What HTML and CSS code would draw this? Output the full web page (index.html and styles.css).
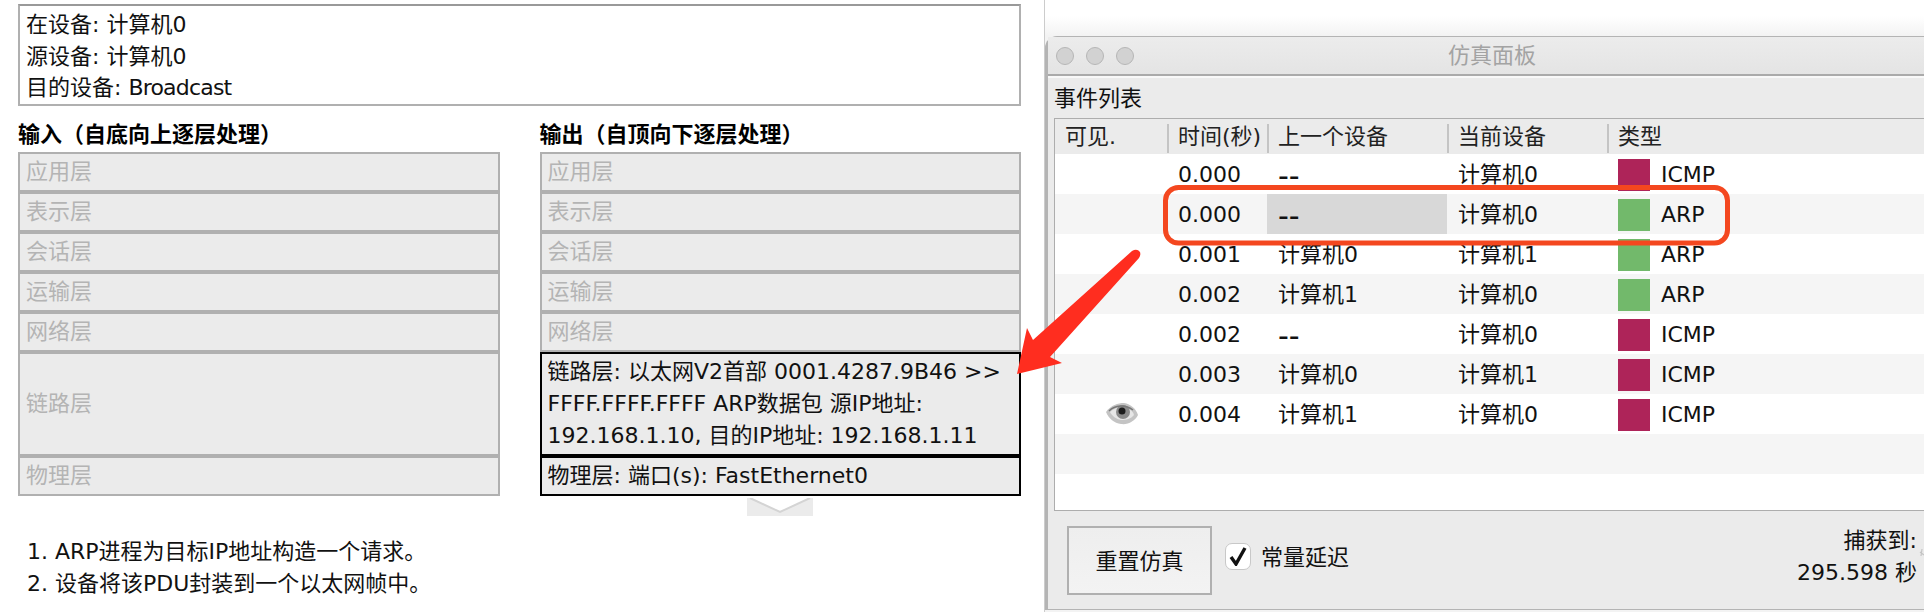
FILE: index.html
```html
<!DOCTYPE html>
<html lang="zh">
<head>
<meta charset="utf-8">
<title>仿真面板</title>
<link rel="stylesheet" href="styles.css">
</head>
<body>
<div class="screen">

<div class="pdu">
    <div class="info">
        <p>在设备: 计算机0</p>
        <p>源设备: 计算机0</p>
        <p>目的设备: <span class="tight">Broadcast</span></p>
    </div>
    <div class="cols">
        <div class="col">
            <h2>输入（自底向上逐层处理）</h2>
            <div class="layer">应用层</div>
            <div class="layer">表示层</div>
            <div class="layer">会话层</div>
            <div class="layer">运输层</div>
            <div class="layer">网络层</div>
            <div class="layer tall">链路层</div>
            <div class="layer">物理层</div>
        </div>
        <div class="col">
            <h2>输出（自顶向下逐层处理）</h2>
            <div class="layer">应用层</div>
            <div class="layer">表示层</div>
            <div class="layer">会话层</div>
            <div class="layer">运输层</div>
            <div class="layer">网络层</div>
            <div class="layer tall on">链路层: 以太网V2首部 0001.4287.9B46 &gt;&gt; FFFF.FFFF.FFFF ARP数据包 源IP地址: 192.168.1.10, 目的IP地址: 192.168.1.11</div>
            <div class="layer on">物理层: 端口(s): FastEthernet0</div>
            <svg class="more" width="66" height="18" viewBox="0 0 66 18">
                <rect width="66" height="18" fill="#ebebeb"/>
                <path d="M3 0 L33 14 L63 0 Z" fill="#fff"/>
                <path d="M3 0 L33 14 L63 0" fill="none" stroke="#d4d4d4" stroke-width="2"/>
            </svg>
        </div>
    </div>
    <ol class="steps">
        <li>1. ARP进程为目标IP地址构造一个请求。</li>
        <li>2. 设备将该PDU封装到一个以太网帧中。</li>
    </ol>
</div>

<div class="side">
    <div class="window">
        <div class="titlebar">
            <div class="lights"><i></i><i></i><i></i></div>
            <div class="title">仿真面板</div>
        </div>
        <div class="list-title">事件列表</div>
        <div class="events">
            <div class="row head">
                <div>可见.</div><div>时间(秒)</div><div>上一个设备</div><div>当前设备</div><div>类型</div>
            </div>
            <div class="row">
                <div></div><div>0.000</div><div class="dash">--</div><div>计算机0</div><div class="type"><b class="icmp"></b>ICMP</div>
            </div>
            <div class="row odd">
                <div></div><div>0.000</div><div class="dash sel">--</div><div>计算机0</div><div class="type"><b class="arp"></b>ARP</div>
            </div>
            <div class="row">
                <div></div><div>0.001</div><div>计算机0</div><div>计算机1</div><div class="type"><b class="arp"></b>ARP</div>
            </div>
            <div class="row odd">
                <div></div><div>0.002</div><div>计算机1</div><div>计算机0</div><div class="type"><b class="arp"></b>ARP</div>
            </div>
            <div class="row">
                <div></div><div>0.002</div><div class="dash">--</div><div>计算机0</div><div class="type"><b class="icmp"></b>ICMP</div>
            </div>
            <div class="row odd">
                <div></div><div>0.003</div><div>计算机0</div><div>计算机1</div><div class="type"><b class="icmp"></b>ICMP</div>
            </div>
            <div class="row">
                <div class="eye">
                    <svg width="32" height="22" viewBox="0 0 32 22">
                        <path d="M0 9 C5 2 12 0 18 0 C25 1 30 6 32 12 C29 18 22 22 15 21 C8 20 3 16 0 9 Z" fill="#c4c4c4"/>
                        <path d="M4 9 C8 5 13 4 18 4 C23 5 27 8 28 12 C25 16 20 17 15 17 C10 16 6 13 4 9 Z" fill="#e6e6e6"/>
                        <circle cx="17" cy="9" r="7" fill="#8a8a8a"/>
                        <circle cx="16" cy="8" r="3.5" fill="#1c1c1c"/>
                        <path d="M3 8 C9 2 19 1 27 7" fill="none" stroke="#777" stroke-width="1.5"/>
                    </svg>
                </div>
                <div>0.004</div><div>计算机1</div><div>计算机0</div><div class="type"><b class="icmp"></b>ICMP</div>
            </div>
            <div class="row odd"></div>
            <div class="row last"></div>
        </div>
        <div class="controls">
            <button class="reset">重置仿真</button>
            <label class="delay">
                <span class="check">
                    <svg width="18" height="20" viewBox="0 0 18 20"><path d="M2 11 L7 18 L16 2" fill="none" stroke="#111" stroke-width="3.4"/></svg>
                </span>
                <span class="delay-text">常量延迟</span>
            </label>
            <div class="captured">捕获到:<br>295.598 秒</div>
        </div>
    </div>
</div>

<!-- annotations drawn over the screenshot -->
<svg class="marks" width="1924" height="612" viewBox="0 0 1924 612">
    <rect x="1165.5" y="187.5" width="562" height="55.5" rx="13" fill="none" stroke="#f4471f" stroke-width="5"/>
    <path d="M1132 251 Q1137 248 1140 252 Q1141 255 1139 258 L1050 357 L1062 363 L1017 374 L1027 328 L1033 340 Z" fill="#ff2d1f"/>
    <path d="M1920 552 L1924 555 M1922 549 L1921 556" fill="none" stroke="#c4c4c4" stroke-width="1.2"/>
</svg>

</div>
</body>
</html>
```

FILE: styles.css
```css
html, body {
    margin: 0;
    padding: 0;
    background: #fff;
}
body {
    font-family: "DejaVu Sans", "Noto Sans CJK SC", sans-serif;
    font-size: 22px;
    color: #111;
}
.screen {
    display: flex;
    position: relative;
    width: 1924px;
    height: 612px;
    overflow: hidden;
}

/* left: pdu details */
.pdu {
    width: 1044px;
    flex: none;
    box-sizing: border-box;
    padding: 4px 0 0 18px;
}
.info {
    width: 1003px;
    height: 102px;
    box-sizing: border-box;
    border: 2px solid #b0b0b0;
    border-top-color: #999;
    padding: 3px 6px;
    line-height: 31.5px;
}
.info p {
    margin: 0;
}
.tight {
    letter-spacing: -0.8px;
}
.cols {
    display: flex;
    gap: 40px;
}
.col {
    width: 481.5px;
}
.col h2 {
    margin: 0;
    height: 46px;
    line-height: 58px;
    font-size: 22px;
    font-weight: bold;
    color: #000;
}
.layer {
    display: flex;
    align-items: center;
    height: 40px;
    box-sizing: border-box;
    border: 2px solid #b0b0b0;
    padding: 0 6px 1px;
    background: #ebebeb;
    color: #b4b4b4;
    line-height: 32px;
}
.tall {
    height: 104px;
}
.on {
    border-color: #000;
    color: #111;
}
.more {
    display: block;
    margin: 2px auto 0;
}
.steps {
    list-style: none;
    margin: 20px 0 0;
    padding: 0 0 0 9px;
    line-height: 31.5px;
}

/* right: simulation panel */
.side {
    flex: 1;
    box-sizing: border-box;
    padding-top: 36px;
    border-left: 1px solid #ccc;
    background: linear-gradient(#fff, #fff 16px, #f3f3f3 36px);
}
.window {
    height: 574px;
    box-sizing: border-box;
    border: 1px solid #b4b4b4;
    border-right: 0;
    border-left-width: 3px;
    border-radius: 12px 0 0 0;
    background: #ebebeb;
}
.titlebar {
    display: flex;
    align-items: center;
    height: 39px;
    box-sizing: border-box;
    border-bottom: 2px solid #aaa;
    background: linear-gradient(#ececec, #e4e4e4);
}
.lights {
    display: flex;
    gap: 12px;
    width: 80px;
    flex: none;
    padding-left: 8px;
}
.lights i {
    width: 16px;
    height: 16px;
    border: 1px solid #b6b6b6;
    border-radius: 50%;
    background: #d2d2d2;
}
.title {
    width: 712px;
    padding-bottom: 5px;
    text-align: center;
    font-size: 22px;
    color: #a3a3a3;
}
.list-title {
    height: 42px;
    box-sizing: border-box;
    border-top: 2px solid #f8f8f8;
    padding: 6px 0 0 6px;
    line-height: 30px;
}
.events {
    height: 393px;
    box-sizing: border-box;
    margin-left: 6px;
    border: 1px solid #adadad;
    border-right: 0;
    background: #fff;
}
.row {
    display: grid;
    grid-template-columns: 112px 100px 180px 160px 1fr;
    height: 40px;
    line-height: 42px;
}
.row > div {
    padding-left: 11px;
}
.odd {
    background: #f5f5f5;
}
.last {
    height: 36px;
}
.head {
    height: 35px;
    line-height: 34px;
    background: #ebebeb;
    color: #222;
}
.head > div {
    padding-left: 9px;
    margin: 5px 0 1px;
    line-height: 25px;
    border-left: 2px solid #c4c4c4;
}
.head > div:first-child {
    border-left: 0;
    padding-left: 10px;
}
.row > .sel {
    background: #d8d8d8;
}
.row > .dash {
    padding-top: 3px;
    height: 37px;
    font-size: 30px;
    line-height: 37px;
}
.row > .eye {
    padding: 9px 0 0 51px;
    line-height: 0;
}
.eye svg {
    filter: blur(0.5px);
}
.type {
    display: flex;
    align-items: center;
    gap: 11px;
}
.type b {
    width: 32px;
    height: 32px;
}
.icmp {
    background: #ae2459;
}
.arp {
    background: #72b96b;
}
.controls {
    display: flex;
    align-items: center;
    height: 98px;
    padding-left: 19px;
}
.reset {
    width: 145px;
    height: 69px;
    margin-top: 1px;
    padding: 0 0 4px;
    border: 2px solid #b0b0b0;
    background: linear-gradient(#eee, #f3f3f3);
    font: inherit;
    color: #111;
}
.delay {
    display: flex;
    align-items: center;
    gap: 10px;
    margin: 0 0 8px 13px;
}
.delay-text {
    margin-bottom: 3px;
}
.check {
    display: flex;
    align-items: center;
    justify-content: center;
    width: 26px;
    height: 27px;
    box-sizing: border-box;
    border: 1px solid #c8c8c8;
    border-radius: 7px;
    background: #fff;
}
.captured {
    margin-left: auto;
    padding-right: 7px;
    margin-bottom: 6px;
    text-align: right;
    line-height: 32px;
}

.marks {
    position: absolute;
    left: 0;
    top: 0;
    pointer-events: none;
}
```
